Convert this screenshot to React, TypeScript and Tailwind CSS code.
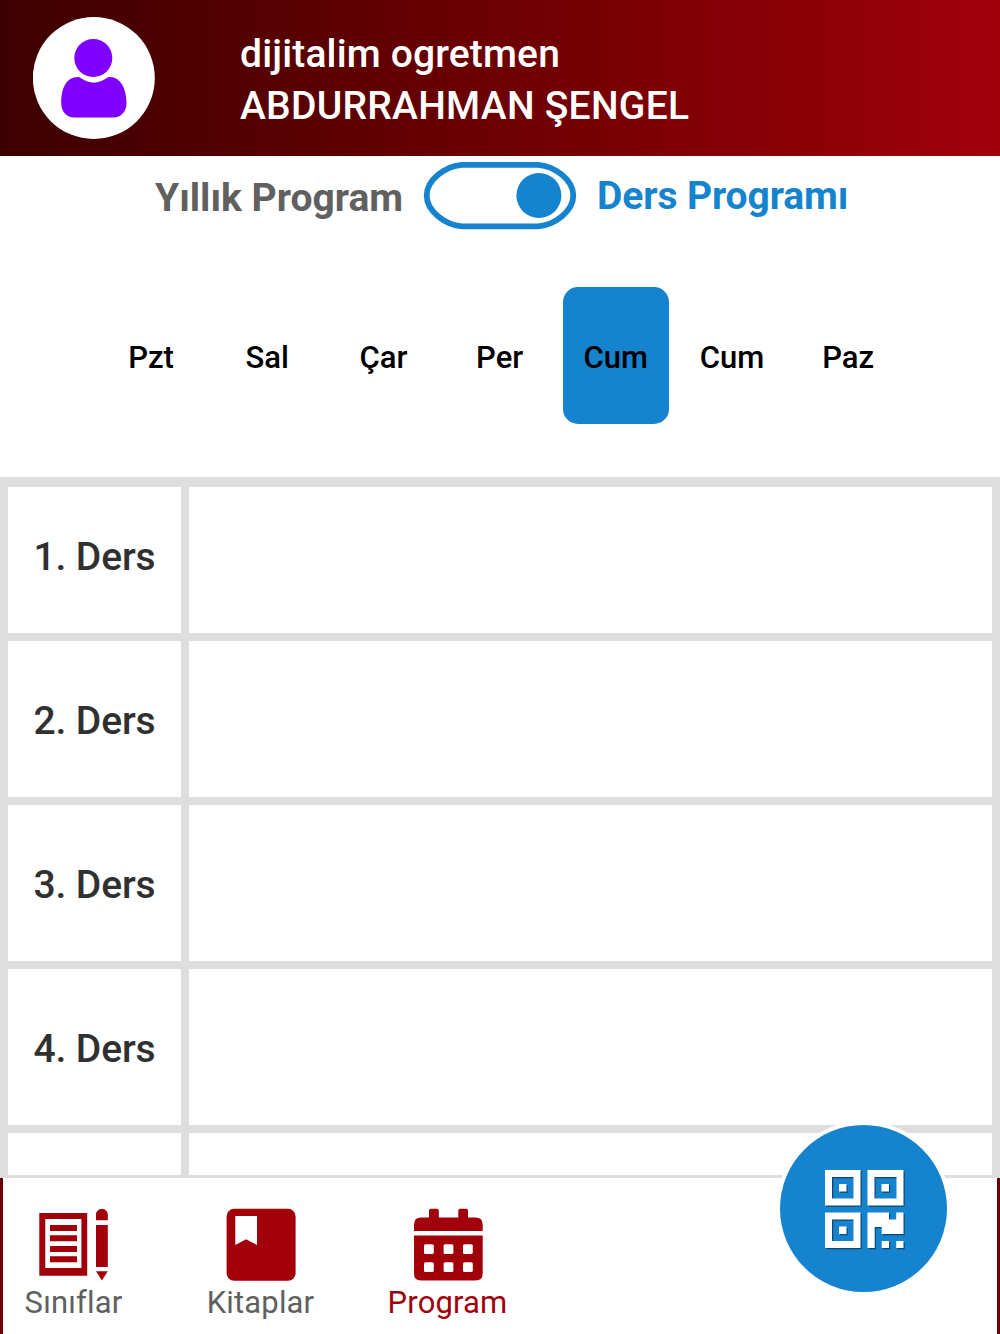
const days = ['Pzt', 'Sal', 'Çar', 'Per', 'Cum', 'Cum', 'Paz'];

const lessons = [
  { label: '1. Ders', height: 'h-[145.5px]', offset: 'pb-[6px]' },
  { label: '2. Ders', height: 'h-[156px]', offset: 'pt-[5px]' },
  { label: '3. Ders', height: 'h-[156px]', offset: 'pt-[5px]' },
  { label: '4. Ders', height: 'h-[156px]', offset: 'pt-[4px]' },
  { label: '', height: 'h-[42px]', offset: '' },
];

function Avatar() {
  return (
    <svg className="ml-[33px] mt-[17px] h-[122px] w-[122px] shrink-0" viewBox="0 0 122 122">
      <circle cx="60.8" cy="61" r="61" fill="#fff" />
      <circle cx="60.3" cy="41" r="19" fill="#7f00ff" />
      <path
        d="M45 60C33 60 28.2 72 28.2 86c0 9 5.5 14.4 13 14.4h39.3c7.500 0 13-5.400 13-14.4C93.500 72 87.500 60 77 60c-2 0-2.500.5-4 1.500-8 5.500-16.500 5.500-24.500 0C47 60.500 46.500 60 45 60Z"
        fill="#7f00ff"
      />
    </svg>
  );
}

function Header() {
  return (
    <header className="flex h-[156px] shrink-0 bg-linear-to-r from-[#3d0000] to-[#a1000b]">
      <Avatar />
      <div className="ml-[85px] mt-[28px] text-[39px] leading-[52px] font-medium whitespace-nowrap text-white">
        <div className="tracking-[0.15px]">dijitalim ogretmen</div>
        <div className="tracking-[0.25px]">ABDURRAHMAN ŞENGEL</div>
      </div>
    </header>
  );
}

function Toggle() {
  return (
    <svg className="ml-[20px] mt-[5px] h-[69px] w-[154px]" viewBox="423 161 154 69">
      <path
        d="M462 164.800H538C555 166 573.300 180 573.300 195.500S555 225 538 226.300H462C445 225 426.700 211 426.700 195.500S445 166 462 164.800Z"
        fill="#fff"
        stroke="#1583ce"
        strokeWidth="5.8"
      />
      <circle cx="538.9" cy="195.500" r="22.500" fill="#1583ce" />
    </svg>
  );
}

function ClassesIcon() {
  return (
    <svg className="h-[73px] w-[72px]" viewBox="38 1208 72 73" fill="#a1000b">
      <path fillRule="evenodd" d="M39.300 1213H87.200V1275.800H39.300ZM45.300 1219V1268H81.400V1219Z" />
      <path d="M50 1225h27v6H50zM50 1235.300h27v6H50zM50 1246h27v6H50zM50 1256.300h27v6H50z" />
      <path d="M96 1220.300V1214.500C96 1207 107.800 1207 107.800 1214.500V1220.300ZM96 1225H107.800V1267H96ZM96 1271.300H107.800L101.900 1280.500Z" />
    </svg>
  );
}

function BookIcon() {
  return (
    <svg className="h-[73px] w-[72px]" viewBox="225 1208 72 73">
      <rect x="226.600" y="1208.700" width="69" height="72" rx="7.500" fill="#a1000b" />
      <path d="M235.300 1216H257V1245L246.200 1239.300L235.300 1245Z" fill="#fff" />
    </svg>
  );
}

function CalendarIcon() {
  return (
    <svg className="h-[73px] w-[72px]" viewBox="412 1208 72 73">
      <path
        d="M414 1231V1224.500Q414 1217.500 421 1217.500H429V1210.500Q429 1208.700 430.800 1208.700H437Q438.800 1208.700 438.800 1210.500V1217.500H458.300V1210.500Q458.300 1208.700 460 1208.700H466.300Q468 1208.700 468 1210.500V1217.500H475.500Q482.700 1217.500 482.700 1224.500V1231ZM414 1235.500H482.700V1273.500Q482.700 1280.500 475.500 1280.500H421Q414 1280.500 414 1273.500Z"
        fill="#a1000b"
      />
      {[424, 443.600, 463].map((x) =>
        [1244.200, 1262.200].map((y) => (
          <rect key={`${x}-${y}`} x={x} y={y} width="9.800" height="9.800" rx="1.600" fill="#fff" />
        )),
      )}
    </svg>
  );
}

const qr =
  'M0 0H35.500V35.500H0ZM7 7V28.500H28.500V7ZM14 14H21.500V21.500H14ZM42.500 0H78.500V35.500H42.500ZM49.500 7V28.500H71.500V7ZM56.500 14H64V21.500H56.500ZM0 42.500H35.500V78H0ZM7 49.500V71H28.500V49.500ZM14 56.500H21.500V64H14ZM42.500 42.500H64V49.500H71.200V42.500H78.500V64H56.700V57H49.700V78H42.500ZM56.700 71H64V78H56.700ZM71.200 71H78.500V78H71.200Z';

function ScanButton() {
  return (
    <button className="absolute left-[776px] top-[1121px] h-[175px] w-[175px]" aria-label="QR">
      <svg className="h-full w-full" viewBox="0 0 175 175">
        <circle cx="87.500" cy="87.500" r="87.500" fill="#fff" />
        <circle cx="87.500" cy="87.500" r="83.500" fill="#1583ce" />
        <path d={qr} transform="translate(50.200 50.200)" fill="#0d4770" fillRule="evenodd" />
        <path d={qr} transform="translate(49 49)" fill="#fff" fillRule="evenodd" />
      </svg>
    </button>
  );
}

export default function App() {
  return (
    <div className="relative flex h-[1334px] w-[1000px] flex-col overflow-hidden bg-white font-['Roboto',sans-serif]">
      <Header />

      <div className="flex h-[131px] shrink-0 text-[39px] leading-[52px] font-bold whitespace-nowrap">
        <div className="ml-[155px] mt-[16px] w-[248px] text-[#606060]">Yıllık Program</div>
        <Toggle />
        <div className="ml-[20px] mt-[14px] tracking-[-0.1px] text-[#1583ce]">Ders Programı</div>
      </div>

      <div className="ml-[98px] flex h-[190px] shrink-0 gap-[10px]">
        {days.map((day, i) => (
          <div
            key={i}
            className={
              i === 4
                ? 'flex h-[137px] w-[106.200px] items-center justify-center rounded-[15px] bg-[#1583ce] pt-[6px] text-[31px] font-medium text-black'
                : 'flex h-[137px] w-[106.200px] items-center justify-center pt-[6px] text-[31px] font-medium text-black'
            }
          >
            {day}
          </div>
        ))}
      </div>

      <main className="flex h-[701px] shrink-0 flex-col gap-[8.100px] bg-[#dedede] px-2 pt-[10px]">
        {lessons.map((lesson, i) => (
          <div key={i} className={`flex shrink-0 gap-2 ${lesson.height}`}>
            <div
              className={`flex w-[173px] items-center justify-center bg-white text-[39px] font-medium tracking-[-0.1px] whitespace-nowrap text-[#303030] ${lesson.offset}`}
            >
              {lesson.label}
            </div>
            <div className="flex-1 bg-white" />
          </div>
        ))}
      </main>

      <nav className="flex h-[156px] shrink-0 border-x-[3px] border-[#6b0008] bg-white pt-[30px] text-[31px] leading-[44px] tracking-[0.15px] text-[#606060] [font-variant-ligatures:none]">
        <div className="flex w-[141px] flex-col items-center">
          <ClassesIcon />
          <span>Sınıflar</span>
        </div>
        <div className="ml-[46px] flex w-[141px] flex-col items-center">
          <BookIcon />
          <span>Kitaplar</span>
        </div>
        <div className="ml-[46px] flex w-[141px] flex-col items-center text-[#a1000b]">
          <CalendarIcon />
          <span>Program</span>
        </div>
      </nav>

      <ScanButton />
    </div>
  );
}
